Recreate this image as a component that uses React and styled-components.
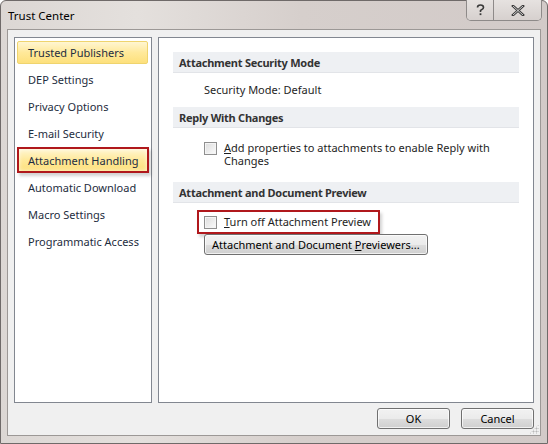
import React from 'react';
import styled, { createGlobalStyle } from 'styled-components';

const GlobalStyle = createGlobalStyle`
    html, body {
        margin: 0;
        padding: 0;
        background: #fff;
    }
    body {
        font-family: "Noto Sans", "Liberation Sans", sans-serif;
        font-size: 11px;
        color: #1e1e1e;
    }
`;

const Window = styled.div`
    width: 548px;
    height: 444px;
    box-sizing: border-box;
    border: 1px solid #6f6a69;
    border-radius: 6px 6px 0 0;
    background: linear-gradient(90deg, #dcd7d4 0%, #e4e0dd 25%, #d6cfcc 55%, #d2cac8 100%);
    display: flex;
    flex-direction: column;
    padding: 0 6px 7px 6px;
`;

const TitleBar = styled.div`
    height: 28px;
    display: flex;
    align-items: flex-start;
    justify-content: space-between;
`;

const Title = styled.div`
    padding: 7px 0 0 1px;
    font-size: 11.5px;
    color: #000;
`;

const CaptionGroup = styled.div`
    display: flex;
    margin-top: -1px;
    margin-right: -1px;
    border: 1px solid #8e8a89;
    border-top: none;
    border-radius: 0 0 5px 5px;
    overflow: hidden;
    box-shadow: inset 0 0 0 1px rgba(255, 255, 255, 0.55);
`;

const CaptionButton = styled.div`
    width: ${p => p.wide ? 47 : 26}px;
    height: 20px;
    display: flex;
    align-items: center;
    justify-content: center;
    background: linear-gradient(#e6e2e0, #d6d0ce);
    & + & {
        border-left: 1px solid #8e8a89;
    }
`;

const Client = styled.div`
    flex: 1;
    border: 1px solid #9c9896;
    background: #f0f0f0;
    display: flex;
    flex-direction: column;
    padding: 7px 6px 6px 6px;
    position: relative;
`;

const Panels = styled.div`
    flex: 1;
    display: flex;
    gap: 6px;
`;

const NavPanel = styled.div`
    width: 138px;
    box-sizing: border-box;
    border: 1px solid #828790;
    background: #fff;
    padding: 3px 2px;
    display: flex;
    flex-direction: column;
    gap: 4px;
`;

const NavItem = styled.div`
    height: ${p => p.flagged ? 26 : 23}px;
    box-sizing: border-box;
    display: flex;
    align-items: center;
    white-space: nowrap;
    color: #1e2d40;
    border-radius: ${p => (p.selected ? '2px' : '0')};
    border: ${p => p.flagged ? '2px solid #b0181c' : p.selected ? '1px solid #efd46e' : '1px solid transparent'};
    background: ${p => (p.selected || p.flagged)
        ? 'linear-gradient(#fff6d2 0%, #ffe99a 50%, #fde07c 100%)'
        : 'transparent'};
    box-shadow: ${p => p.flagged ? '2px 3px 3px rgba(0,0,0,0.18), inset 0 0 4px rgba(255,255,255,0.7)' : 'none'};
    margin: ${p => p.flagged ? '-2px 0 -1px 0' : '0 1px 0 0'};
    padding-left: ${p => p.flagged ? 9 : 10}px;
`;

const ContentPanel = styled.div`
    flex: 1;
    border: 1px solid #828790;
    background: #fff;
    padding: 14px 14px 0 14px;
    display: flex;
    flex-direction: column;
`;

const SectionHeader = styled.div`
    height: 20px;
    background: #eef0f3;
    border-bottom: 1px solid #e2e4e8;
    display: flex;
    align-items: center;
    padding-left: 6px;
    font-weight: bold;
    letter-spacing: -0.25px;
    color: #333;
`;

const SectionBody = styled.div`
    padding: ${p => p.pad || '8px 0 8px 31px'};
    display: flex;
    flex-direction: column;
    align-items: flex-start;
    line-height: 15px;
    color: #1e1e1e;
`;

const CheckRow = styled.label`
    display: flex;
    align-items: flex-start;
    gap: 7px;
    padding: ${p => p.flagged ? '3px 7px 3px 5px' : '0'};
    margin-left: ${p => p.flagged ? '-7px' : '0'};
    border: ${p => p.flagged ? '2px solid #b0181c' : 'none'};
    box-shadow: ${p => p.flagged ? '2px 3px 3px rgba(0,0,0,0.18)' : 'none'};
`;

const Box = styled.span`
    width: 13px;
    height: 13px;
    margin-top: 1px;
    flex: none;
    box-sizing: border-box;
    border: 1px solid #8f8f8f;
    background: linear-gradient(135deg, #dcdcdc, #fbfbfb);
    box-shadow: inset 0 0 0 1px #f4f4f4;
`;

const CheckText = styled.span`
    line-height: 13px;
    max-width: 290px;
`;

const Button = styled.button`
    font: inherit;
    color: #000;
    height: 21px;
    padding: 0 7px;
    min-width: ${p => p.minWidth || 0}px;
    border: 1px solid #707070;
    border-radius: 3px;
    background: linear-gradient(#f2f2f2 0%, #ebebeb 50%, #dddddd 51%, #cfcfcf 100%);
    box-shadow: inset 0 0 0 1px rgba(255, 255, 255, 0.7);
`;

const Footer = styled.div`
    display: flex;
    justify-content: flex-end;
    gap: 11px;
    padding-top: 5px;
`;

const Grip = styled.div`
    position: absolute;
    right: 1px;
    bottom: 1px;
    width: 10px;
    height: 10px;
    background-image: radial-gradient(circle, #b8b8b8 0.8px, transparent 1.2px);
    background-size: 3px 3px;
    clip-path: polygon(100% 0, 100% 100%, 0 100%);
`;

const U = styled.span`
    text-decoration: underline;
    text-underline-offset: 1px;
`;

const navItems = [
    'Trusted Publishers',
    'DEP Settings',
    'Privacy Options',
    'E-mail Security',
    'Attachment Handling',
    'Automatic Download',
    'Macro Settings',
    'Programmatic Access',
];

export default function App() {
    return (
        <>
            <GlobalStyle />
            <Window>
                <TitleBar>
                    <Title>Trust Center</Title>
                    <CaptionGroup>
                        <CaptionButton>
                            <svg width="9" height="12" viewBox="0 0 9 12">
                                <path d="M1.5 3.5 C1.5 1.5 3 1 4.5 1 C6 1 7.5 1.8 7.5 3.5 C7.5 5 5.5 5.5 4.5 6.5 L4.5 8" fill="none" stroke="#3a3a3a" strokeWidth="1.6" />
                                <rect x="3.6" y="9.3" width="1.8" height="1.8" fill="#3a3a3a" />
                            </svg>
                        </CaptionButton>
                        <CaptionButton wide>
                            <svg width="14" height="11" viewBox="0 0 14 11">
                                <path d="M2 1 L12 10 M12 1 L2 10" stroke="#3a3a3a" strokeWidth="2.6" strokeLinecap="square" />
                                <path d="M2 1 L12 10 M12 1 L2 10" stroke="#f2f2f2" strokeWidth="0.8" />
                            </svg>
                        </CaptionButton>
                    </CaptionGroup>
                </TitleBar>
                <Client>
                    <Panels>
                        <NavPanel>
                            {navItems.map((item, id) => (
                                <NavItem
                                    key={id}
                                    selected={id === 0}
                                    flagged={item === 'Attachment Handling'}
                                >
                                    {item}
                                </NavItem>
                            ))}
                        </NavPanel>
                        <ContentPanel>
                            <SectionHeader>Attachment Security Mode</SectionHeader>
                            <SectionBody pad="9px 0 10px 31px">Security Mode: Default</SectionBody>
                            <SectionHeader>Reply With Changes</SectionHeader>
                            <SectionBody pad="13px 0 15px 31px">
                                <CheckRow>
                                    <Box />
                                    <CheckText><U>A</U>dd properties to attachments to enable Reply with Changes</CheckText>
                                </CheckRow>
                            </SectionBody>
                            <SectionHeader>Attachment and Document Preview</SectionHeader>
                            <SectionBody pad="7px 0 0 31px">
                                <CheckRow flagged>
                                    <Box />
                                    <CheckText><U>T</U>urn off Attachment Preview</CheckText>
                                </CheckRow>
                                <Button>Attachment and Document <U>P</U>reviewers...</Button>
                            </SectionBody>
                        </ContentPanel>
                    </Panels>
                    <Footer>
                        <Button minWidth={73}>OK</Button>
                        <Button minWidth={73}>Cancel</Button>
                    </Footer>
                    <Grip />
                </Client>
            </Window>
        </>
    );
}
